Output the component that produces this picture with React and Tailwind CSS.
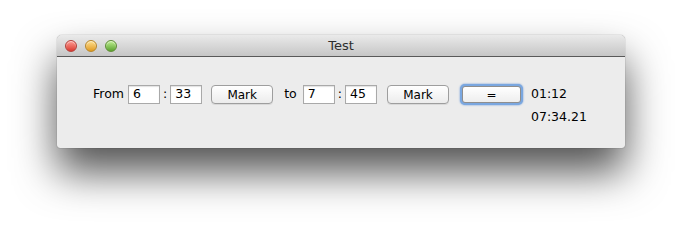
import React from "react";

const TimeInput = ({ value }) => (
  <div className="w-[32px] h-[19px] bg-white border border-[#a9a9a9] shadow-[inset_0_1px_1px_rgba(0,0,0,0.12)] flex items-center pl-[4px] text-[12.5px] leading-none">
    {value}
  </div>
);

const Button = ({ children, focused = false }) => {
  if (focused) {
    return (
      <div className="w-[63px] h-[21px] rounded-[5px] p-[2px] bg-[#7aa7e0] shadow-[0_0_2px_#5b8fd6]">
        <div className="w-full h-full rounded-[3px] border border-[#8e8e8e] bg-gradient-to-b from-white to-[#eeeeee] flex items-center justify-center text-[12px] leading-none">
          {children}
        </div>
      </div>
    );
  }
  return (
    <div className="w-[62px] h-[19px] rounded-[4px] border border-[#9e9e9e] bg-gradient-to-b from-white to-[#ececec] shadow-[0_1px_0_rgba(0,0,0,0.08)] flex items-center justify-center text-[12px] leading-none">
      {children}
    </div>
  );
};

const Light = ({ from, to, border }) => (
  <div
    className={`w-[12px] h-[12px] rounded-full border ${border} bg-gradient-to-b ${from} ${to} shadow-[inset_0_1px_1px_rgba(255,255,255,0.6)]`}
  />
);

export default function App() {
  return (
    <div
      className="w-[681px] h-[227px] bg-white pl-[57px] pt-[35px] text-black"
      style={{ fontFamily: '"DejaVu Sans", "Liberation Sans", sans-serif' }}
    >
      <div className="w-[568px] h-[113px] rounded-t-[5px] rounded-b-[3px] bg-[#ececec] shadow-[0_24px_42px_rgba(0,0,0,0.68),0_0_1px_rgba(0,0,0,0.6)] flex flex-col overflow-hidden">
        {/* Title bar */}
        <div className="h-[22px] shrink-0 bg-gradient-to-b from-[#eaeaea] to-[#c6c6c6] border-b border-[#595959] flex items-center relative">
          <div className="flex items-center gap-[8px] pl-[8px]">
            <Light from="from-[#ff9a93]" to="to-[#d9362f]" border="border-[#b3403a]" />
            <Light from="from-[#ffe08a]" to="to-[#e09b17]" border="border-[#b7862a]" />
            <Light from="from-[#bff08f]" to="to-[#5ba32c]" border="border-[#5f8d35]" />
          </div>
          <div className="absolute inset-0 flex items-center justify-center text-[13px] text-[#2e2e2e]">
            Test
          </div>
        </div>

        {/* Content */}
        <div className="flex-1 pt-[27px] pl-[36px]">
          <div className="flex items-start text-[12.5px]">
            <div className="h-[21px] flex items-center">From</div>
            <div className="h-[21px] flex items-center ml-[4px]">
              <TimeInput value="6" />
            </div>
            <div className="h-[21px] flex items-center mx-[3px]">:</div>
            <div className="h-[21px] flex items-center">
              <TimeInput value="33" />
            </div>
            <div className="h-[21px] flex items-center ml-[9px]">
              <Button>Mark</Button>
            </div>
            <div className="h-[21px] flex items-center ml-[11px]">to</div>
            <div className="h-[21px] flex items-center ml-[6px]">
              <TimeInput value="7" />
            </div>
            <div className="h-[21px] flex items-center mx-[3px]">:</div>
            <div className="h-[21px] flex items-center">
              <TimeInput value="45" />
            </div>
            <div className="h-[21px] flex items-center ml-[10px]">
              <Button>Mark</Button>
            </div>
            <div className="h-[21px] flex items-center ml-[11px]">
              <Button focused>=</Button>
            </div>
            <div className="flex flex-col ml-[8px] gap-[2px]">
              <div className="h-[21px] flex items-center">01:12</div>
              <div className="h-[21px] flex items-center">07:34.21</div>
            </div>
          </div>
        </div>
      </div>
    </div>
  );
}
